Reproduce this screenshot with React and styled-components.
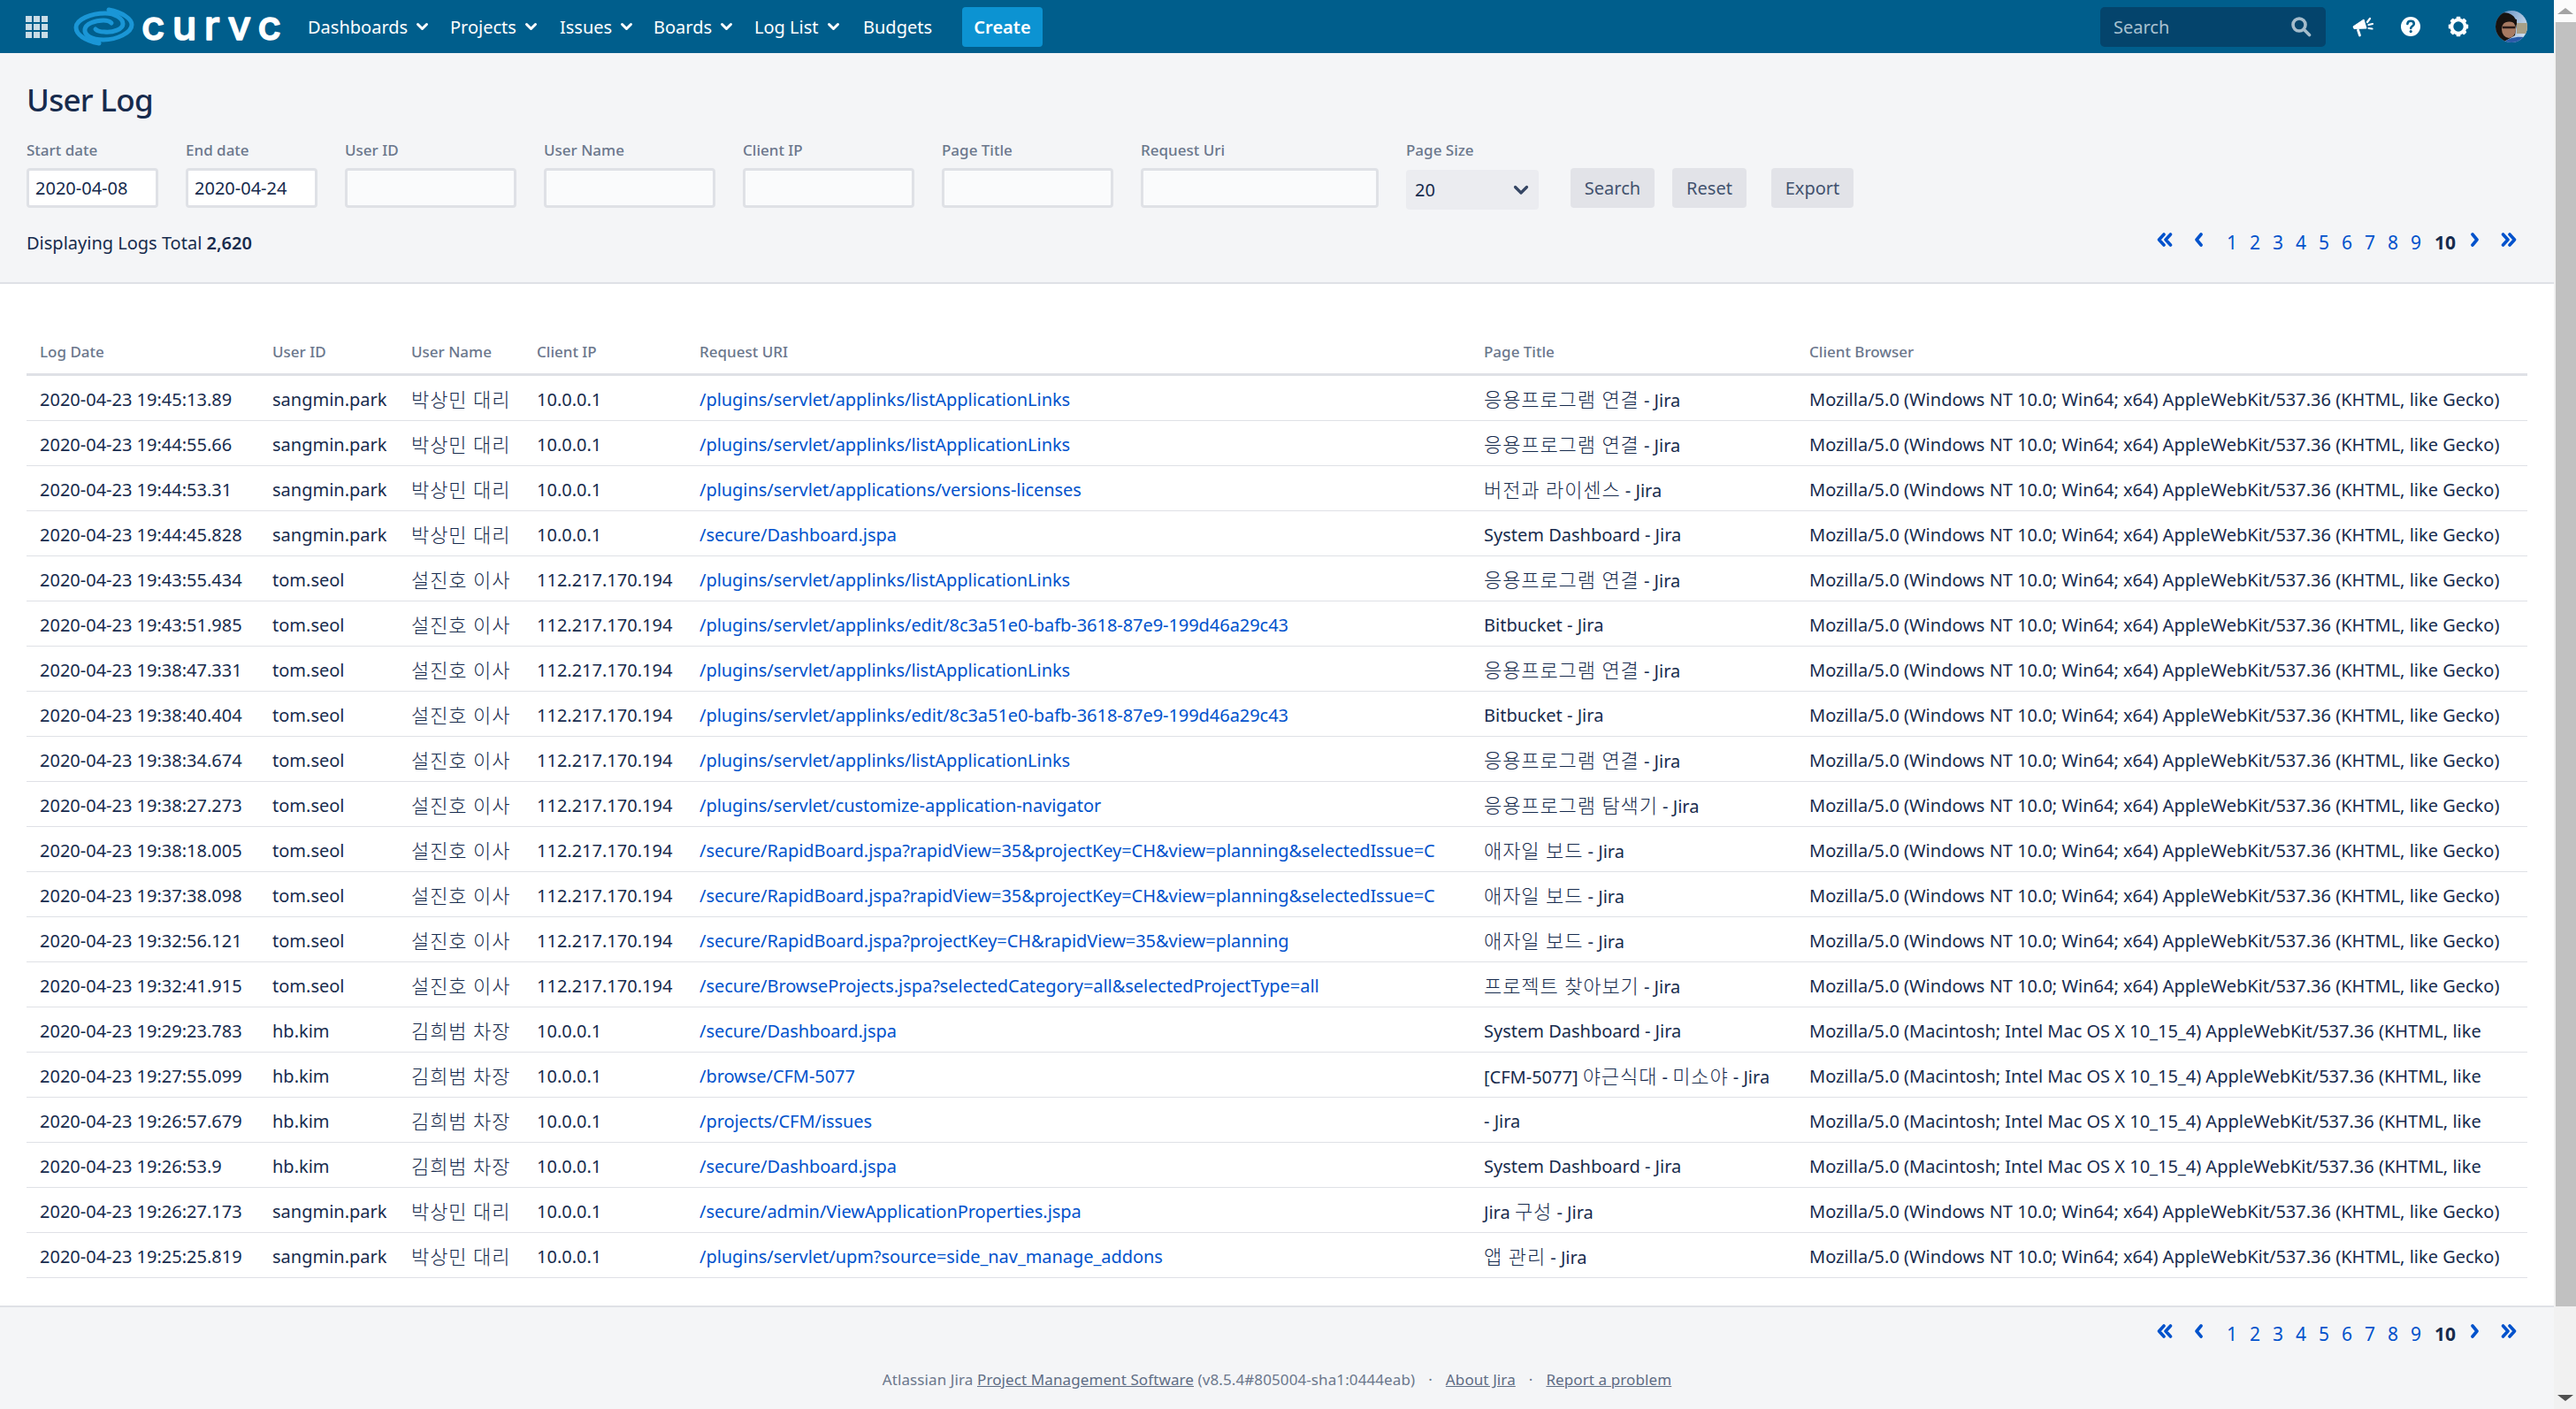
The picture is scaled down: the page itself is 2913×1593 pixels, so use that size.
import React from "react";
import styled, { createGlobalStyle } from "styled-components";

const Global = createGlobalStyle`
  html, body { margin: 0; padding: 0; height: 100%; overflow: hidden; background: #f4f5f7; }
  * { box-sizing: border-box; }
  body { font-family: "Noto Sans", "Noto Sans CJK KR", sans-serif; font-size: 20px; color: #172b4d; }
`;

const Shell = styled.div`display: flex; width: 2913px; height: 1593px; overflow: hidden;`;
const PageColumn = styled.div`width: 2888px; flex: none; display: flex; flex-direction: column;`;

const Scrollbar = styled.div`width: 25px; flex: none; margin-left: 0; background: #f1f1f1; display: flex; flex-direction: column;`;
const ScrollButton = styled.div`
  height: 25px; flex: none; display: flex; align-items: center; justify-content: center;
  background: ${p => (p.$up ? "#fbfbfb" : "#f1f1f1")};
  margin-top: ${p => (p.$up ? "0" : "auto")};
  &::after {
    content: ""; width: 0; height: 0; border-left: 9px solid transparent; border-right: 9px solid transparent;
    ${p => (p.$up ? "border-bottom: 7px solid #a3a3a3;" : "border-top: 7px solid #505050;")}
  }
`;
const ScrollThumb = styled.div`height: 1452px; flex: none; background: #c1c1c1; margin-left: 2px;`;

const TopBar = styled.header`
  height: 60px; flex: none; background: #005e8c; display: flex; align-items: center; padding: 0 30px 0 29px;
`;
const AppGrid = styled.div`
  display: grid; grid-template-columns: repeat(3, 7px); grid-auto-rows: 7px; gap: 2px; margin-right: 49px;
  span { background: #c9dce6; }
`;
const LogoWrap = styled.div`display: flex; align-items: center; margin-left: -4px;`;
const LogoMark = styled.svg`width: 90px; height: 60px; flex: none; margin-left: -25px;`;
const WordMark = styled.svg`
  width: 165px; height: 60px; flex: none; margin-left: -6px;
  text { font-family: Inter, sans-serif; font-size: 46px; font-weight: 500; fill: #fff; stroke: #fff; stroke-width: 1.5px; stroke-linejoin: round; }
`;
const Nav = styled.nav`display: flex; align-items: center; margin-left: 25px;`;
const NavItem = styled.a`
  display: flex; align-items: center; color: #fff; font-size: 20px; white-space: nowrap;
  width: ${p => p.$w}px;
`;
const NavChevron = styled.svg`width: 15px; height: 11px; margin-left: 9px; flex: none;`;
const CreateButton = styled.button`
  width: 91px; height: 45px; margin-left: 37px; border: 0; border-radius: 4px; background: #0c93d2; color: #fff;
  font-family: inherit; font-size: 20px; font-weight: 600; padding: 0;
`;
const TopRight = styled.div`margin-left: auto; display: flex; align-items: center;`;
const SearchBox = styled.div`
  width: 255px; height: 45px; border-radius: 5px; background: #04446c; display: flex; align-items: center;
  padding: 0 16px 0 15px; color: #a9c2d1; font-size: 20px; justify-content: space-between;
`;
const TopIcon = styled.svg`width: 26px; height: 26px; flex: none; margin-left: ${p => p.$ml}px;`;
const Avatar = styled.svg`width: 36px; height: 36px; flex: none; margin-left: 29px; border-radius: 50%;`;

const TopSection = styled.section`height: 259px; flex: none; padding: 33px 30px 0;`;
const Title = styled.h1`margin: 0; font-size: 35px; line-height: 40px; font-weight: 500; color: #172b4d; letter-spacing: -0.7px;`;
const Filters = styled.form`display: flex; margin: 25px 0 0; align-items: flex-start;`;
const Field = styled.label`display: flex; flex-direction: column; width: ${p => p.$w}px; margin-right: 31px; flex: none;`;
const FieldLabel = styled.span`
  font-size: 17px; line-height: 24px; height: 32px; color: #6b778c; font-weight: 500; white-space: nowrap;
`;
const TextInput = styled.input`
  height: 45px; width: 100%; border: 3px solid #dfe1e6; border-radius: 4px; padding: 0 7px;
  background: ${p => (p.$filled ? "#ffffff" : "#fafbfc")}; font-family: inherit; font-size: 20px; color: #172b4d;
`;
const SelectBox = styled.div`
  height: 45px; margin-top: 2px; background: #ebecf0; border-radius: 4px; display: flex; align-items: center;
  justify-content: space-between; padding: 0 11px 0 10px; font-size: 20px;
`;
const ActionGroup = styled.div`display: flex; padding-top: 32px; margin-left: 5px;`;
const ActionButton = styled.button`
  height: 45px; width: ${p => p.$w}px; margin-right: ${p => p.$mr}px; border: 0; border-radius: 4px; background: #e2e3e8; padding: 0;
  color: #42526e; font-family: inherit; font-size: 20px;
`;
const StatusRow = styled.div`height: 30px; margin-top: 22px; display: flex; align-items: center; justify-content: space-between;`;
const StatusText = styled.div`font-size: 20px; color: #172b4d; b { font-weight: 600; }`;

const Pager = styled.div`display: flex; align-items: center; height: 30px; margin-right: 0;`;
const PageNum = styled.a`
  width: ${p => (p.$current ? 40 : 26)}px; text-align: center; font-size: 21px; line-height: 30px;
  color: ${p => (p.$current ? "#172b4d" : "#0052cc")}; font-weight: ${p => (p.$current ? 700 : 400)};
`;
const PagerIcon = styled.svg`width: ${p => p.$w}px; height: 16px; flex: none; margin: 0 ${p => p.$mr}px 6px ${p => p.$ml}px;`;

const Panel = styled.main`
  flex: none; background: #fff; border-top: 2px solid #dfe1e6; border-bottom: 2px solid #dfe1e6; padding: 51px 30px 31px;
`;
const Table = styled.table`width: 2828px; table-layout: fixed; border-collapse: separate; border-spacing: 0;`;
const Th = styled.th`
  width: ${p => p.$w}px; height: 53px; padding: 0 15px; text-align: left; font-size: 17px; font-weight: 500; color: #6b778c;
  border-bottom: 3px solid #dfe1e6; white-space: nowrap;
`;
const Td = styled.td`
  height: 51px; padding: 3px 15px 0; border-bottom: 1.5px solid #dfe1e6; font-size: 20px; line-height: 28px;
  white-space: nowrap; overflow: hidden; color: #172b4d;
`;
const Hangul = styled.span`font-size: 22px; font-weight: 300; letter-spacing: 0.9px;`;
const LogLink = styled.a`color: #0052cc; text-decoration: none; letter-spacing: -0.05px;`;

const BottomPagerRow = styled.div`height: 30px; margin-top: 15px; padding-right: 30px; display: flex; justify-content: flex-end;`;
const Footer = styled.footer`
  margin-top: 25px; text-align: center; font-size: 17px; line-height: 24px; color: #6b778c; letter-spacing: 0.1px;
  a { color: #5e6c84; text-decoration: underline; }
  i { font-style: normal; margin: 0 15px; }
`;

const colWidths = [263, 157, 142, 184, 887, 368, 827];
const heads = ["Log Date", "User ID", "User Name", "Client IP", "Request URI", "Page Title", "Client Browser"];

const WIN = "Mozilla/5.0 (Windows NT 10.0; Win64; x64) AppleWebKit/537.36 (KHTML, like Gecko)";
const MAC = "Mozilla/5.0 (Macintosh; Intel Mac OS X 10_15_4) AppleWebKit/537.36 (KHTML, like";
const PARK = ["sangmin.park", "박상민 대리", "10.0.0.1"];
const SEOL = ["tom.seol", "설진호 이사", "112.217.170.194"];
const KIM = ["hb.kim", "김희범 차장", "10.0.0.1"];
const LIST = "/plugins/servlet/applinks/listApplicationLinks";
const EDIT = "/plugins/servlet/applinks/edit/8c3a51e0-bafb-3618-87e9-199d46a29c43";
const DASH = "/secure/Dashboard.jspa";
const RAPID = "/secure/RapidBoard.jspa?rapidView=35&projectKey=CH&view=planning&selectedIssue=C";
const CONN = "응용프로그램 연결 - Jira";

const rows = [
  ["2020-04-23 19:45:13.89", PARK, LIST, CONN, WIN],
  ["2020-04-23 19:44:55.66", PARK, LIST, CONN, WIN],
  ["2020-04-23 19:44:53.31", PARK, "/plugins/servlet/applications/versions-licenses", "버전과 라이센스 - Jira", WIN],
  ["2020-04-23 19:44:45.828", PARK, DASH, "System Dashboard - Jira", WIN],
  ["2020-04-23 19:43:55.434", SEOL, LIST, CONN, WIN],
  ["2020-04-23 19:43:51.985", SEOL, EDIT, "Bitbucket - Jira", WIN],
  ["2020-04-23 19:38:47.331", SEOL, LIST, CONN, WIN],
  ["2020-04-23 19:38:40.404", SEOL, EDIT, "Bitbucket - Jira", WIN],
  ["2020-04-23 19:38:34.674", SEOL, LIST, CONN, WIN],
  ["2020-04-23 19:38:27.273", SEOL, "/plugins/servlet/customize-application-navigator", "응용프로그램 탐색기 - Jira", WIN],
  ["2020-04-23 19:38:18.005", SEOL, RAPID, "애자일 보드 - Jira", WIN],
  ["2020-04-23 19:37:38.098", SEOL, RAPID, "애자일 보드 - Jira", WIN],
  ["2020-04-23 19:32:56.121", SEOL, "/secure/RapidBoard.jspa?projectKey=CH&rapidView=35&view=planning", "애자일 보드 - Jira", WIN],
  ["2020-04-23 19:32:41.915", SEOL, "/secure/BrowseProjects.jspa?selectedCategory=all&selectedProjectType=all", "프로젝트 찾아보기 - Jira", WIN],
  ["2020-04-23 19:29:23.783", KIM, DASH, "System Dashboard - Jira", MAC],
  ["2020-04-23 19:27:55.099", KIM, "/browse/CFM-5077", "[CFM-5077] 야근식대 - 미소야 - Jira", MAC],
  ["2020-04-23 19:26:57.679", KIM, "/projects/CFM/issues", "- Jira", MAC],
  ["2020-04-23 19:26:53.9", KIM, DASH, "System Dashboard - Jira", MAC],
  ["2020-04-23 19:26:27.173", PARK, "/secure/admin/ViewApplicationProperties.jspa", "Jira 구성 - Jira", WIN],
  ["2020-04-23 19:25:25.819", PARK, "/plugins/servlet/upm?source=side_nav_manage_addons", "앱 관리 - Jira", WIN],
];

const navItems = [["Dashboards", 161, true], ["Projects", 124, true], ["Issues", 106, true], ["Boards", 114, true], ["Log List", 123, true], ["Budgets", 75, false]];

const MixedText = ({ text }) =>
  text.split(/([가-힣]+(?: [가-힣]+)*)/).map((part, i) =>
    i % 2 ? <Hangul key={i}>{part}</Hangul> : part
  );

const Chevron = () => (
  <NavChevron viewBox="0 0 15 11"><path d="M2.5 2.5 L7.5 7.5 L12.5 2.5" fill="none" stroke="#fff" strokeWidth="3" strokeLinecap="round" strokeLinejoin="round" /></NavChevron>
);

const PagerArrow = ({ d, w, ml = 0, mr = 0 }) => (
  <PagerIcon $w={w} $ml={ml} $mr={mr} viewBox={`0 0 ${w} 16`}>
    <path d={d} fill="none" stroke="#0052cc" strokeWidth="3.6" strokeLinecap="round" strokeLinejoin="round" />
  </PagerIcon>
);

const Pagination = () => (
  <Pager>
    <PagerArrow w={18} mr={25} d="M8 2 L2.5 8 L8 14 M15.5 2 L10 8 L15.5 14" />
    <PagerArrow w={9} mr={20} d="M7 2 L2 8 L7 14" />
    {[1, 2, 3, 4, 5, 6, 7, 8, 9].map(n => <PageNum key={n}>{n}</PageNum>)}
    <PageNum $current>10</PageNum>
    <PagerArrow w={9} ml={9} mr={25} d="M2 2 L7 8 L2 14" />
    <PagerArrow w={18} mr={12} d="M2.5 2 L8 8 L2.5 14 M10 2 L15.5 8 L10 14" />
  </Pager>
);

const Gear = () => (
  <TopIcon $ml={28} viewBox="0 0 26 26">
    <circle cx="13" cy="13" r="7.6" fill="none" stroke="#fff" strokeWidth="3.8" />
    {[0, 45, 90, 135, 180, 225, 270, 315].map(a => (
      <rect key={a} x="10.6" y="1.8" width="4.8" height="5" rx="1" fill="#fff" transform={`rotate(${a} 13 13)`} />
    ))}
  </TopIcon>
);

export default function App() {
  return (
    <Shell>
      <Global />
      <PageColumn>
        <TopBar>
          <AppGrid>{Array.from({ length: 9 }).map((_, i) => <span key={i} />)}</AppGrid>
          <LogoWrap>
            <LogoMark viewBox="0 0 90 60">
              <g fill="none" stroke="#1a96d6" strokeWidth="5" strokeLinecap="round">
                <path d="M49 11 C64 14 75 21 75 28 C75 37 58 45 43 45 C30 45 21 40 22 33 C23 27 33 23 43 23 C47 23 50 24 52 26" />
                <path d="M38 49 C22 46 12 39 12 31 C12 22 29 15 45 15 C56 15 65 21 65 27 C65 33 54 37 44 36 C40 36 36 35 34 33" />
              </g>
            </LogoMark>
            <WordMark viewBox="0 0 165 60">
              <text x="2" y="44.8" textLength="158" lengthAdjust="spacing">curvc</text>
            </WordMark>
          </LogoWrap>
          <Nav>
            {navItems.map(([label, w, chev]) => (
              <NavItem key={label} $w={w}>{label}{chev && <Chevron />}</NavItem>
            ))}
            <CreateButton>Create</CreateButton>
          </Nav>
          <TopRight>
            <SearchBox>
              Search
              <svg width="24" height="24" viewBox="0 0 24 24"><circle cx="10" cy="10" r="7" fill="none" stroke="#a5bccb" strokeWidth="3.6" /><path d="M15.5 15.5 L21.5 21.5" stroke="#a5bccb" strokeWidth="3.6" strokeLinecap="round" /></svg>
            </SearchBox>
            <TopIcon $ml={29} viewBox="0 0 26 26">
              <path d="M2 13 L14 5 L17 15 L3 15.5 Z" fill="#fff" stroke="#fff" strokeWidth="1" strokeLinejoin="round" />
              <path d="M7.5 17 L9.5 23" stroke="#fff" strokeWidth="2.8" strokeLinecap="round" />
              <path d="M18 8 L21 4 M19.5 11 L24 10 M19.5 15 L23.5 15.5" stroke="#fff" strokeWidth="2.2" strokeLinecap="round" />
            </TopIcon>
            <TopIcon $ml={28} viewBox="0 0 26 26">
              <circle cx="13" cy="13" r="11" fill="#fff" />
              <path d="M9.4 10 C9.6 7.8 11.2 6.8 13.1 6.8 C15.2 6.8 16.8 8 16.8 9.9 C16.8 12.4 13.2 12.5 13.2 15" fill="none" stroke="#005e8c" strokeWidth="2.6" strokeLinecap="round" />
              <circle cx="13.2" cy="18.6" r="1.6" fill="#005e8c" />
            </TopIcon>
            <Gear />
            <Avatar viewBox="0 0 36 36">
              <defs><linearGradient id="sky" x1="0" y1="0" x2="1" y2="0.6"><stop offset="0" stopColor="#4d7fb8" /><stop offset="1" stopColor="#cfdff0" /></linearGradient></defs>
              <rect width="36" height="36" fill="url(#sky)" />
              <rect x="24" y="14" width="12" height="12" fill="#a8a088" />
              <path d="M0 6 C8 -1 22 2 24 14 L22 28 L8 36 L0 36 Z" fill="#17120f" />
              <ellipse cx="15" cy="21" rx="8" ry="10" fill="#a77a62" />
              <path d="M8 16 C12 11 20 12 24 16 L24 10 L10 8 Z" fill="#17120f" />
              <path d="M8 19 L22 19" stroke="#2b1c18" strokeWidth="2.6" />
              <path d="M10 36 C14 31 24 29 32 30 L30 36 Z" fill="#2a5aa8" />
            </Avatar>
          </TopRight>
        </TopBar>

        <TopSection>
          <Title>User Log</Title>
          <Filters>
            <Field $w={149}><FieldLabel>Start date</FieldLabel><TextInput $filled defaultValue="2020-04-08" /></Field>
            <Field $w={149}><FieldLabel>End date</FieldLabel><TextInput $filled defaultValue="2020-04-24" /></Field>
            <Field $w={194}><FieldLabel>User ID</FieldLabel><TextInput /></Field>
            <Field $w={194}><FieldLabel>User Name</FieldLabel><TextInput /></Field>
            <Field $w={194}><FieldLabel>Client IP</FieldLabel><TextInput /></Field>
            <Field $w={194}><FieldLabel>Page Title</FieldLabel><TextInput /></Field>
            <Field $w={269}><FieldLabel>Request Uri</FieldLabel><TextInput /></Field>
            <Field $w={150}>
              <FieldLabel>Page Size</FieldLabel>
              <SelectBox>
                20
                <svg width="18" height="12" viewBox="0 0 18 12"><path d="M2.5 2.5 L9 9 L15.5 2.5" fill="none" stroke="#344563" strokeWidth="3.2" strokeLinecap="round" strokeLinejoin="round" /></svg>
              </SelectBox>
            </Field>
            <ActionGroup>
              <ActionButton type="button" $w={95} $mr={20}>Search</ActionButton>
              <ActionButton type="button" $w={84} $mr={28}>Reset</ActionButton>
              <ActionButton type="button" $w={93} $mr={0}>Export</ActionButton>
            </ActionGroup>
          </Filters>
          <StatusRow>
            <StatusText>Displaying Logs Total <b>2,620</b></StatusText>
            <Pagination />
          </StatusRow>
        </TopSection>

        <Panel>
          <Table>
            <thead>
              <tr>{heads.map((h, i) => <Th key={h} $w={colWidths[i]}>{h}</Th>)}</tr>
            </thead>
            <tbody>
              {rows.map(([date, [id, name, ip], uri, title, browser], i) => (
                <tr key={i}>
                  <Td>{date}</Td>
                  <Td>{id}</Td>
                  <Td><MixedText text={name} /></Td>
                  <Td>{ip}</Td>
                  <Td><LogLink>{uri}</LogLink></Td>
                  <Td><MixedText text={title} /></Td>
                  <Td>{browser}</Td>
                </tr>
              ))}
            </tbody>
          </Table>
        </Panel>

        <BottomPagerRow><Pagination /></BottomPagerRow>
        <Footer>
          Atlassian Jira <a>Project Management Software</a> (v8.5.4#805004-sha1:0444eab)<i>·</i><a>About Jira</a><i>·</i><a>Report a problem</a>
        </Footer>
      </PageColumn>
      <Scrollbar>
        <ScrollButton $up />
        <ScrollThumb />
        <ScrollButton />
      </Scrollbar>
    </Shell>
  );
}
